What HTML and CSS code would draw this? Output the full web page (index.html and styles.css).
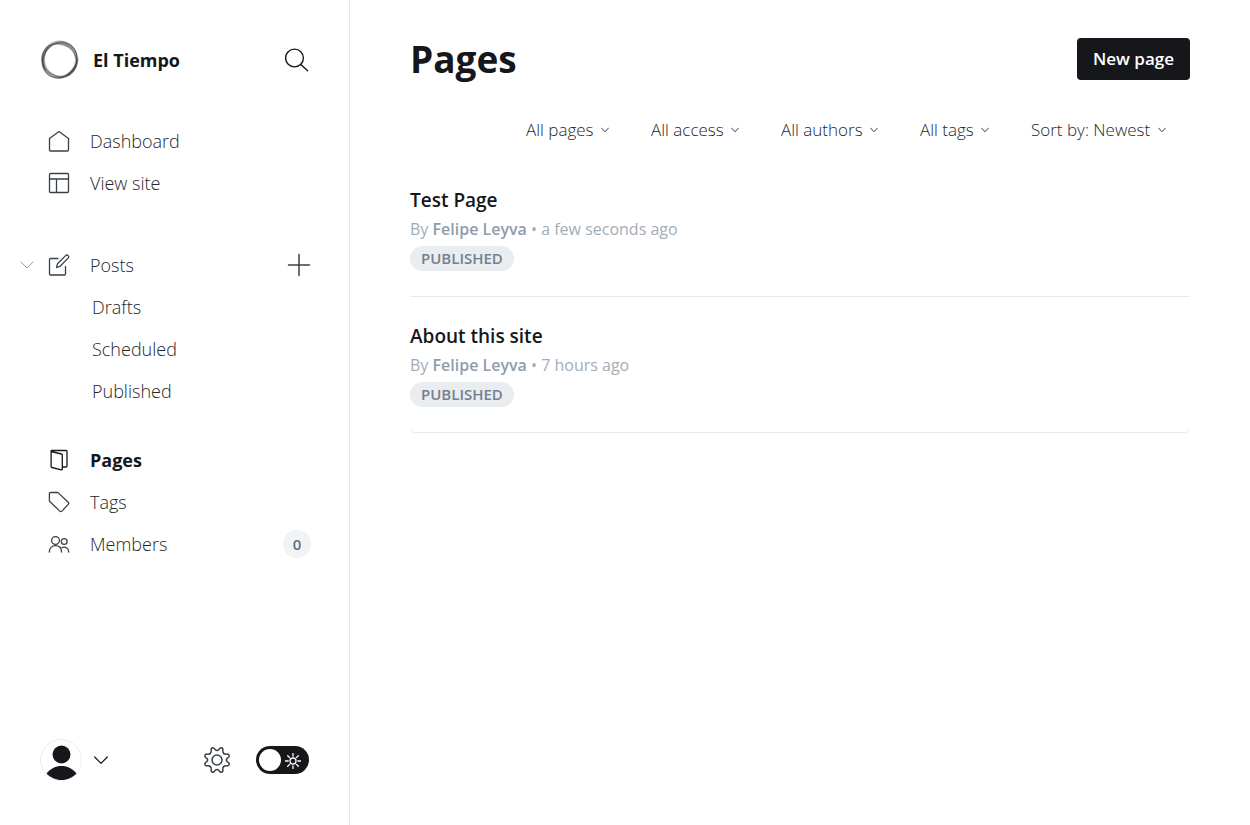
FILE: index.html
```html
<!DOCTYPE html>
<html lang="en">
<head>
<meta charset="utf-8">
<meta name="viewport" content="width=device-width, initial-scale=1">
<title>Pages - El Tiempo</title>
<link rel="stylesheet" href="styles.css">
</head>
<body>
<div class="app">
  <aside class="sidebar">
    <header class="brand">
      <svg class="brand-logo" viewBox="0 0 40 40" aria-hidden="true">
        <g fill="none" stroke="#222">
          <ellipse cx="19.500" cy="20" rx="18.300" ry="16.500" stroke-width="1.300" opacity=".45" transform="rotate(-45 20 20)"/>
          <ellipse cx="20" cy="20" rx="18.600" ry="16.300" stroke-width="1" opacity=".35" transform="rotate(-62 20 20)"/>
          <ellipse cx="19.500" cy="20.500" rx="18" ry="16" stroke-width="1.300" opacity=".45" transform="rotate(35 20 20)"/>
          <ellipse cx="19.500" cy="20" rx="17.500" ry="16.500" stroke-width="3" opacity=".3" transform="rotate(80 20 20)"/>
        </g>
        <path d="M10 5c9-7 22-4 27 8-7-6-16-9-27-8z" fill="#777" stroke="none" opacity=".5"/>
        <path d="M38.500 17c.5 10-6 17-15 20 7-6 12-11 15-20z" fill="#444" stroke="none" opacity=".5"/>
        <path d="M4 30C-1 20 2 10 10 5 4 13 3 20 6 30z" fill="#444" stroke="none" opacity=".5"/>
      </svg>
      <span class="brand-name">El Tiempo</span>
      <button class="icon-button" type="button" aria-label="Search">
        <svg class="icon-search" viewBox="0 0 24 24"><circle cx="9.500" cy="10" r="8.900"/><path d="M15.800 16.500l6.800 6.300"/></svg>
      </button>
    </header>

    <nav class="nav" aria-label="Main">
      <ul class="nav-group">
        <li class="nav-item"><a class="nav-link" href="#dashboard">
          <svg class="nav-icon" viewBox="0 0 22 22"><path d="M11 1.500l9.500 7V20a1 1 0 0 1-1 1h-17a1 1 0 0 1-1-1V8.500z"/></svg>Dashboard</a></li>
        <li class="nav-item"><a class="nav-link" href="#site">
          <svg class="nav-icon" viewBox="0 0 22 22"><rect x="1.500" y="1.500" width="19" height="19" rx="1"/><path d="M1.500 7h19M8.500 7v13.500"/></svg>View site</a></li>
      </ul>
      <ul class="nav-group nav-posts">
        <li class="nav-item">
          <button class="collapse" type="button" aria-label="Collapse posts"><svg class="icon-collapse" viewBox="0 0 14 8"><path d="M1 1l6 6 6-6"/></svg></button>
          <a class="nav-link" href="#posts">
          <svg class="nav-icon" viewBox="0 0 22 22"><path d="M10 4.500H2.500a1 1 0 0 0-1 1V20a1 1 0 0 0 1 1H16.500a1 1 0 0 0 1-1v-7.500"/><path d="M8.500 13.500l1-3.800 8.100-8.100a1.700 1.700 0 0 1 2.500 2.500l-8 8.200z"/></svg>Posts</a>
          <a class="add" href="#new-post" aria-label="New post"><svg class="icon-add" viewBox="0 0 24 24"><path d="M12 1.500v21M1.500 12h21"/></svg></a>
        </li>
        <li class="nav-item"><a class="nav-link nav-sub" href="#drafts">Drafts</a></li>
        <li class="nav-item"><a class="nav-link nav-sub" href="#scheduled">Scheduled</a></li>
        <li class="nav-item"><a class="nav-link nav-sub" href="#published">Published</a></li>
      </ul>
      <ul class="nav-group">
        <li class="nav-item"><a class="nav-link active" href="#pages" aria-current="page">
          <svg class="nav-icon" viewBox="0 0 22 22"><path d="M3 2.500l10.500 2.500a1 1 0 0 1 .8 1v14a.8.800 0 0 1-1 .8L4 18.500a1 1 0 0 1-.9-1V2.300a.8.800 0 0 1 .8-.8H18a1 1 0 0 1 1 1V17a1 1 0 0 1-1 1h-3.700"/></svg>Pages</a></li>
        <li class="nav-item"><a class="nav-link" href="#tags">
          <svg class="nav-icon" viewBox="0 0 22 22"><path d="M2.500 1.500h6.800a2 2 0 0 1 1.300.6l9.600 9.200a1.500 1.500 0 0 1 0 2.100l-6.300 6.700a1.500 1.500 0 0 1-2.100 0L2 10.800A2 2 0 0 1 1.400 9.500v-7a1 1 0 0 1 1.100-1z"/></svg>Tags</a></li>
        <li class="nav-item"><a class="nav-link" href="#members">
          <svg class="nav-icon" viewBox="0 0 22 22"><circle cx="7.500" cy="7.500" r="3.900"/><circle cx="16.200" cy="8.500" r="2.900"/><path d="M1.300 19c0-4 2.600-6.300 6.100-6.300s6.100 2.300 6.100 6.300M14 14.600c3.300-1.500 6.700.3 6.700 4.400"/></svg>Members</a>
          <span class="count">0</span></li>
      </ul>
    </nav>

    <footer class="sidebar-footer">
      <button class="account" type="button" aria-label="Account menu">
        <svg class="avatar" viewBox="0 0 42 42"><circle class="avatar-ring" cx="21" cy="21" r="20.500"/><circle cx="21.500" cy="15.500" r="9"/><path d="M6.500 34.500c4-5 9-7.500 15-7.500s11 2.500 15 7.500c-4 4-9 6.500-15 6.500s-11-2.500-15-6.500z"/></svg>
        <svg class="icon-chevron" viewBox="0 0 14 8"><path d="M.7 1L7 7.300 13.300 1"/></svg>
      </button>
      <a class="settings" href="#settings" aria-label="Settings">
        <svg class="icon-gear" viewBox="-13 -13 26 26">
          <circle r="5"/>
          <path id="tooth" d="M0-9.400C3-9.400 2-12.900 4.400-12.200C7.800-11.200 4.200-9.100 6.650-6.650"/>
          <path id="tooth-side" d="M6.650-6.650C9.100-4.200 11.200-7.800 12.200-4.400C12.900-2 9.400-3 9.400 0"/>
          <use href="#tooth" transform="rotate(90)"/>
          <use href="#tooth-side" transform="rotate(90)"/>
          <use href="#tooth" transform="rotate(180)"/>
          <use href="#tooth-side" transform="rotate(180)"/>
          <use href="#tooth" transform="rotate(270)"/>
          <use href="#tooth-side" transform="rotate(270)"/>
        </svg>
      </a>
      <label class="theme">
        <input class="theme-input" type="checkbox" role="switch" aria-label="Night mode">
        <svg class="theme-sun" viewBox="0 0 16 16"><circle cx="8" cy="8" r="3"/><path d="M8 .5v2.700M8 12.800v2.700M.5 8h2.700M12.800 8h2.700M2.700 2.700l1.900 1.900M11.400 11.400l1.900 1.900M2.700 13.300l1.900-1.900M11.400 4.600l1.900-1.900"/></svg>
      </label>
    </footer>
  </aside>

  <main class="content">
    <header class="page-header">
      <h1 class="page-title">Pages</h1>
      <a class="new-page" href="#new-page">New page</a>
    </header>

    <div class="filters">
      <label class="filter"><select class="filter-select" aria-label="Page type"><option>All pages</option></select><svg class="filter-arrow" viewBox="0 0 8 6"><path d="M.5 1L4 4.800 7.500 1"/></svg></label>
      <label class="filter"><select class="filter-select" aria-label="Access"><option>All access</option></select><svg class="filter-arrow" viewBox="0 0 8 6"><path d="M.5 1L4 4.800 7.500 1"/></svg></label>
      <label class="filter"><select class="filter-select" aria-label="Author"><option>All authors</option></select><svg class="filter-arrow" viewBox="0 0 8 6"><path d="M.5 1L4 4.800 7.500 1"/></svg></label>
      <label class="filter"><select class="filter-select" aria-label="Tag"><option>All tags</option></select><svg class="filter-arrow" viewBox="0 0 8 6"><path d="M.5 1L4 4.800 7.500 1"/></svg></label>
      <label class="filter"><select class="filter-select" aria-label="Sort order"><option>Sort by: Newest</option></select><svg class="filter-arrow" viewBox="0 0 8 6"><path d="M.5 1L4 4.800 7.500 1"/></svg></label>
    </div>

    <ol class="page-list">
      <li class="page-row">
        <h2 class="row-title"><a class="row-link" href="#test-page">Test Page</a></h2>
        <p class="row-meta">By <strong class="row-author">Felipe Leyva</strong> • a few seconds ago</p>
        <span class="status">PUBLISHED</span>
      </li>
      <li class="page-row">
        <h2 class="row-title"><a class="row-link" href="#about">About this site</a></h2>
        <p class="row-meta">By <strong class="row-author">Felipe Leyva</strong> • 7 hours ago</p>
        <span class="status">PUBLISHED</span>
      </li>
    </ol>
  </main>
</div>
</body>
</html>
```
FILE: styles.css
```css
* {
  box-sizing: border-box;
}

body {
  margin: 0;
  background: #fff;
  color: #15171a;
  font-family: "Open Sans", "Noto Sans", sans-serif;
  font-size: 17px;
}

a {
  color: inherit;
  text-decoration: none;
}

button {
  padding: 0;
  border: 0;
  background: none;
  color: inherit;
  font: inherit;
}

ul,
ol {
  margin: 0;
  padding: 0;
  list-style: none;
}

svg {
  display: block;
  flex: none;
  fill: none;
  stroke: currentColor;
  stroke-linecap: round;
  stroke-linejoin: round;
}

.app {
  display: grid;
  grid-template-columns: 350px 1fr;
  min-height: 100vh;
}

.sidebar {
  display: flex;
  flex-direction: column;
  border-right: 1px solid #e5e7ea;
}

.brand {
  display: flex;
  align-items: center;
  height: 120px;
  padding: 0 40px;
}

.brand-logo {
  width: 40px;
  height: 40px;
}

.brand-name {
  flex: 1;
  margin-left: 13px;
  font-size: 18px;
  font-weight: 700;
}

.icon-search {
  width: 24px;
  height: 24px;
  stroke-width: 1.4;
}

.nav {
  flex: 1;
  color: #394047;
}

.nav-posts {
  margin: 40px 0 27px;
}

.nav-item {
  display: flex;
  align-items: center;
  position: relative;
  height: 42px;
  padding: 0 38px 0 48px;
}

.nav-link {
  display: flex;
  flex: 1;
  align-items: center;
  gap: 20px;
  color: #22272c;
  font-size: 18px;
  font-weight: 300;
  line-height: 42px;
}

.nav-link.active {
  color: #15171a;
  font-weight: 700;
}

.nav-sub {
  padding-left: 44px;
}

.nav-icon {
  width: 22px;
  height: 22px;
  stroke-width: 1.3;
}

.nav-link:not(.active) .nav-icon {
  color: #394047;
}

.collapse {
  position: absolute;
  left: 20px;
  padding: 6px 0;
  color: #8e9cac;
}

.icon-collapse {
  width: 14px;
  height: 8px;
}

.icon-add {
  width: 24px;
  height: 24px;
  stroke-width: 1.5;
}

.count {
  width: 28px;
  border-radius: 14px;
  background: #f1f3f5;
  color: #626d79;
  font-size: 15px;
  font-weight: 600;
  line-height: 28px;
  text-align: center;
}

.sidebar-footer {
  display: flex;
  align-items: center;
  padding: 0 40px 44px;
}

.account {
  display: flex;
  align-items: center;
  gap: 12px;
  margin-right: auto;
}

.avatar {
  width: 42px;
  height: 42px;
  fill: #15171a;
  stroke: none;
}

.avatar-ring {
  fill: #fff;
  stroke: #eceef0;
}

.icon-chevron {
  width: 14px;
  height: 8px;
  stroke-width: 1.2;
}

.settings {
  margin-right: 26px;
  color: #394047;
}

.icon-gear {
  width: 26px;
  height: 26px;
  stroke-width: 1.5;
  overflow: visible;
}

.theme {
  position: relative;
}

.theme-input {
  display: flex;
  align-items: center;
  appearance: none;
  width: 53px;
  height: 28px;
  margin: 0;
  padding: 3px;
  border-radius: 14px;
  background: #15171a;
}

.theme-input::before {
  content: "";
  width: 22px;
  height: 22px;
  border-radius: 50%;
  background: #fff;
}

.theme-sun {
  position: absolute;
  top: 7px;
  right: 8px;
  width: 16px;
  height: 16px;
  color: #fff;
  stroke-width: 1.3;
  pointer-events: none;
}

.content {
  min-width: 0;
  padding: 32px 60px;
}

.page-header {
  display: flex;
  align-items: center;
  justify-content: space-between;
}

.page-title {
  margin: 0;
  font-size: 37px;
  font-weight: 700;
  line-height: 54px;
}

.new-page {
  padding: 0 16px;
  border-radius: 4px;
  background: #15171a;
  color: #fff;
  font-weight: 600;
  line-height: 42px;
}

.filters {
  display: flex;
  justify-content: flex-end;
  gap: 42px;
  margin: 32px 24px 19px 0;
}

.filter {
  display: flex;
  align-items: center;
  gap: 7px;
}

.filter-select {
  appearance: none;
  padding: 0;
  border: 0;
  background: none;
  color: #22272c;
  font: inherit;
  font-weight: 300;
  line-height: 24px;
}

.filter-arrow {
  width: 8px;
  height: 6px;
  color: #394047;
}

.page-row {
  padding: 26px 0 25px;
  border-bottom: 1px solid #e9ecef;
}

.page-row:last-child {
  border-radius: 0 0 5px 5px;
}

.row-title {
  margin: 0;
  font-size: 19px;
  font-weight: 600;
  line-height: 26px;
}

.row-meta {
  margin: 4px 0 5px;
  color: #a2adb9;
  font-size: 16px;
  line-height: 24px;
}

.row-author {
  color: #8e9cac;
  font-weight: 600;
}

.status {
  display: block;
  width: fit-content;
  padding: 0 11px;
  border-radius: 13px;
  background: #e9edf0;
  color: #738091;
  font-size: 15px;
  font-weight: 600;
  line-height: 25px;
}
```
